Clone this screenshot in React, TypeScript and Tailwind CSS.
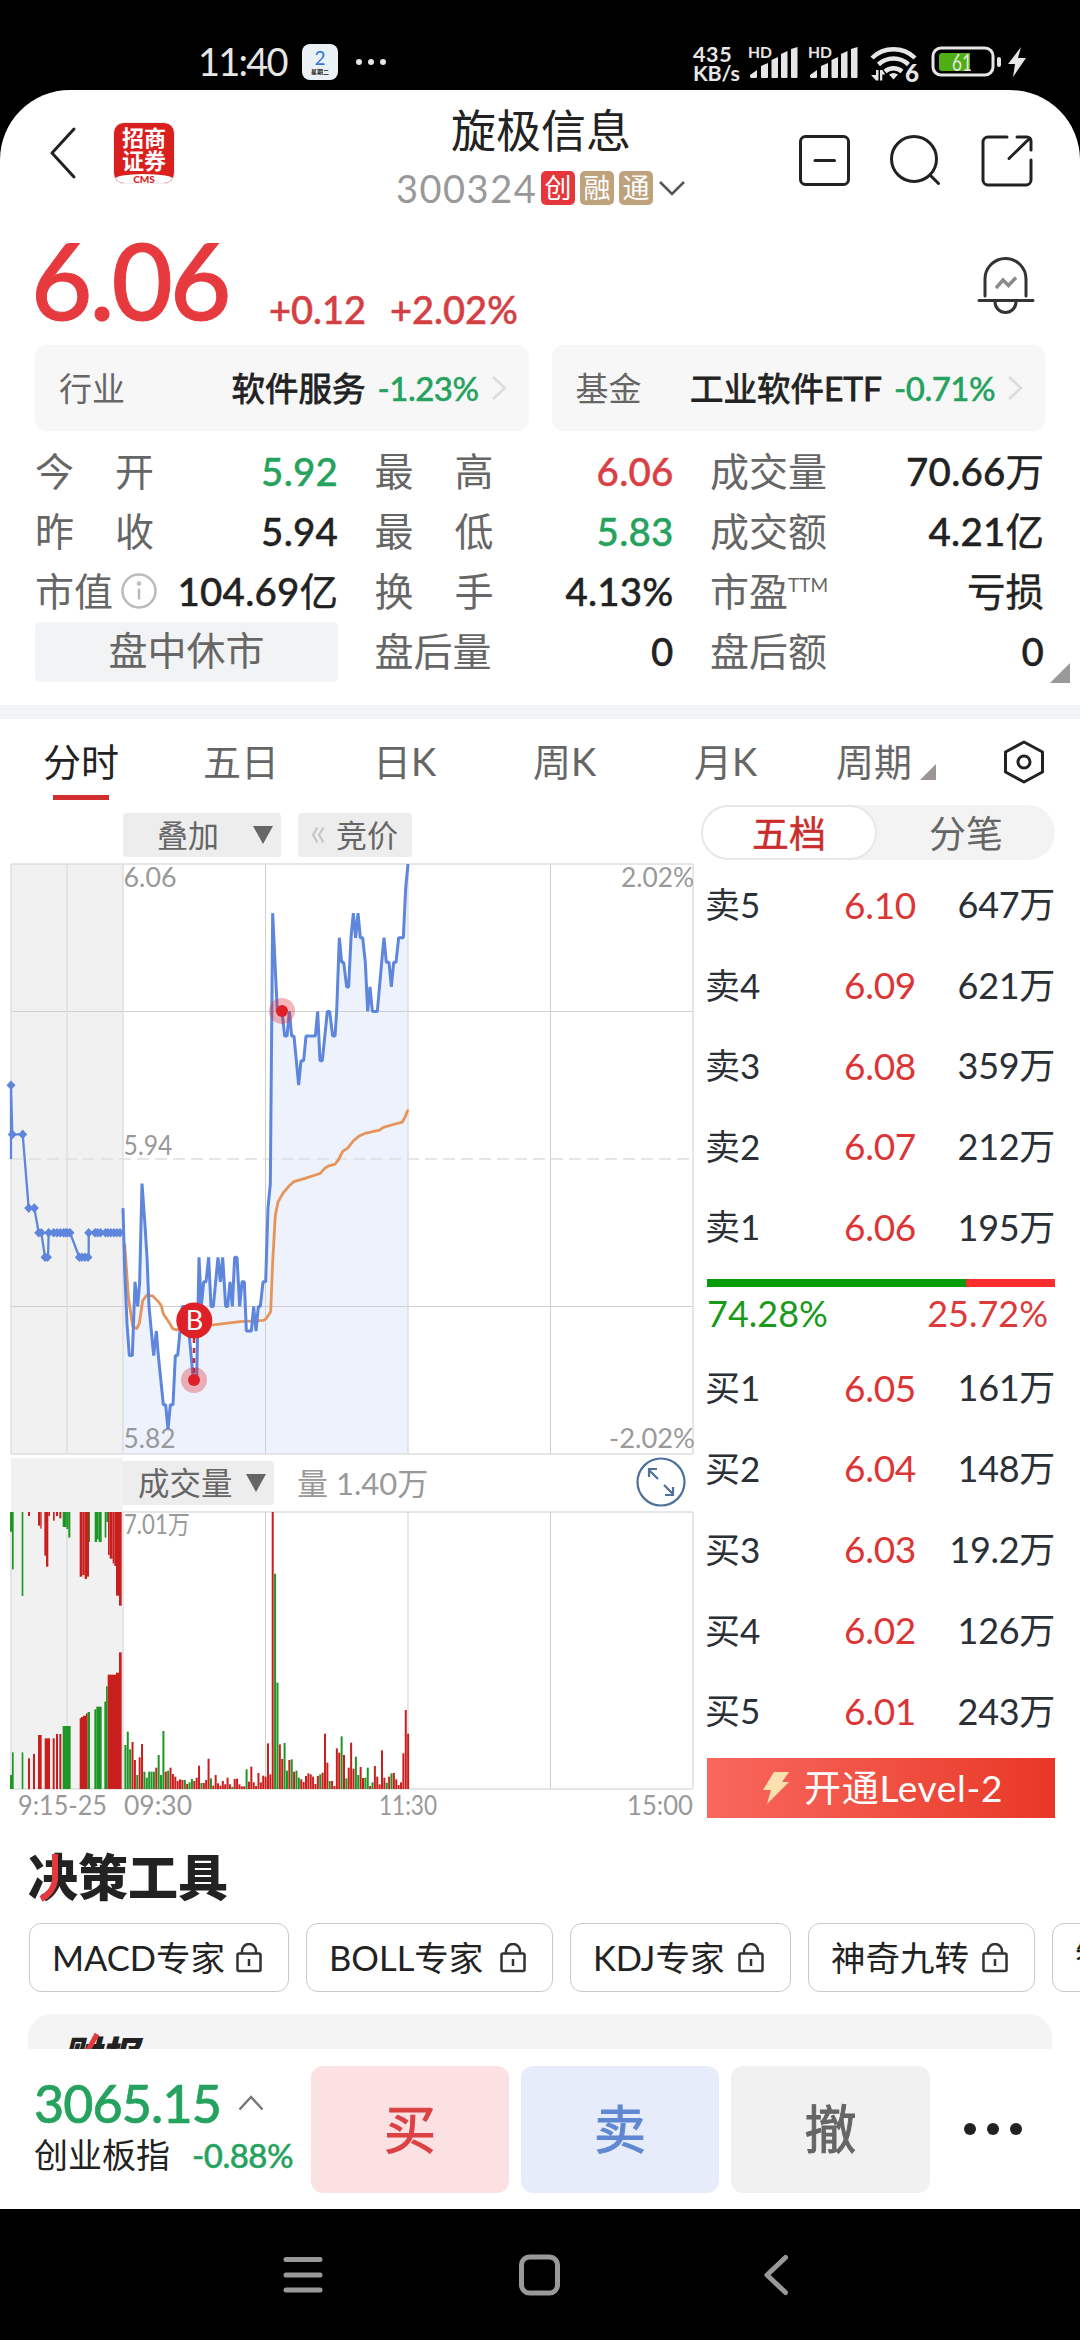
import React from "react";

/* ---------- chart data ---------- */

// Auction phase: [x, price step below the top line]
const auctionLine: [number, number][] = [
  [11, 12], [11, 9], [12.3, 11], [22.7, 11], [28.7, 14], [34.3, 14], [38.7, 15], [41.3, 15], [45, 16], [48, 16],
  [48.7, 15], [70, 15], [79.3, 16], [88.7, 16], [88.7, 15], [123, 15],
];
const auctionDots: [number, number][] = [
  [11, 9], [12.3, 11], [22.7, 11], [28.7, 14], [34.3, 14], [38.7, 15], [41.3, 15], [45, 16], [47.5, 16], [48.7, 15],
  [53.7, 15], [57, 15], [60.3, 15], [63.5, 15], [65.5, 15], [67.5, 15], [70, 15], [79.3, 16], [82, 16], [85, 16],
  [88, 16], [88.7, 15], [95, 15], [97.5, 15], [100.5, 15], [105.5, 15], [108, 15], [111, 15], [114, 15], [117, 15], [120, 15],
];
const priceLine: [number, number][] = [
  [369, 14], [374, 16.5], [381, 18.7], [388, 20], [397, 20], [405, 17], [413, 18], [419, 17], [426, 13], [434, 14.5], [441, 16],
  [447, 18], [454, 19], [461, 20], [469, 19], [475, 20], [490, 22], [497, 22], [504, 23], [511, 22], [519, 22], [526, 20],
  [533, 20], [540, 19], [547, 18], [558, 18], [568, 19.2], [580, 21], [590, 21], [597, 16], [604, 18], [611, 17], [618, 17],
  [626, 16], [633, 18], [640, 18], [654, 16], [661, 17], [668, 16], [677, 18], [683, 18], [690, 17], [697, 18], [704, 16],
  [711, 16], [719, 18], [726, 17], [733, 17], [739, 19], [754, 19], [761, 18], [768, 19], [775, 18], [781, 18], [789, 17],
  [797, 17], [804, 14], [811, 13], [818, 2], [825, 4], [832, 6], [846, 6], [854, 7], [861, 7], [868, 6], [875, 7], [882, 7],
  [896, 9], [903, 8], [911, 8], [918, 7], [946, 7], [953, 6], [960, 8], [967, 8], [982, 6], [989, 6], [998, 7], [1005, 7],
  [1010, 6], [1018, 3], [1025, 4], [1031, 4], [1040, 5], [1046, 5], [1053, 3], [1060, 2], [1067, 3], [1074, 2], [1081, 3],
  [1088, 3], [1096, 4], [1103, 6], [1110, 5], [1117, 6], [1132, 6], [1145, 4], [1152, 3], [1159, 4], [1167, 4], [1174, 5],
  [1181, 4], [1188, 4], [1196, 3], [1210, 3], [1217, 1], [1224, 0],
];
const averageLine: [number, number][] = [
  [374, 940], [378, 985], [385, 1070], [398, 1143], [410, 1148], [418, 1135], [428, 1080], [440, 1066], [458, 1068], [475, 1082], [484, 1092],
  [490, 1112], [505, 1130], [518, 1148], [530, 1151], [560, 1143], [640, 1139], [720, 1131], [790, 1128], [798, 1124],
  [812, 1107], [818, 985], [826, 870], [834, 838], [850, 815], [868, 798], [882, 788], [915, 780], [960, 768], [975, 755],
  [985, 750], [1005, 745], [1015, 735], [1028, 714], [1043, 706], [1060, 688], [1078, 676], [1095, 670], [1138, 662],
  [1150, 655], [1180, 648], [1207, 642], [1215, 630], [1224, 612],
];

// One bar per minute: colour letter, then the top of the bar.
const volumeBars =
  "g885 g845 g898 r876 r930 g975 r922 r882 g965 g983 g965 g965 g965 r953 g915 g975 g843 r965 g962 r953 r972 r980 r993 r988 r990 g990 r1002 g997 g987 r993 r983 r947 g999 r999 r990 r926 g985 r1007 r975 r1000 r1007 r993 r1003 r983 r1003 g1010 r987 r986 r1003 r1009 r1009 g958 r995 r950 r997 r1008 r969 r997 r977 r980 r880 r973 r186 g371 g698 r883 r927 g879 g962 r930 g928 r965 g962 g983 r988 r996 r978 r970 r973 r980 r1002 r978 g973 r968 r851 r938 g993 r993 r1008 r895 r908 g859 r915 g985 r953 r878 r956 g920 g975 r951 r984 g983 g953 r1008 g997 r948 r980 r1003 r901 r983 g998 r980 g970 r969 r988 r1005 r997 r910 r780 r851".split(
    " ",
  );

type Bar = [number, number, string, number];
const auctionTop: Bar[] = [
  [30, 36, "g", 245], [36, 41, "g", 358], [65, 70, "g", 438], [84, 90, "r", 198], [114, 121, "r", 227], [121, 125, "r", 236],
  [133, 138, "r", 317], [138, 145, "r", 350], [145, 150, "r", 198], [159, 164, "r", 212], [168, 174, "r", 198], [178, 184, "r", 205],
  [188, 199, "g", 231], [199, 205, "g", 237], [205, 211, "g", 263], [239, 247, "r", 380], [247, 254, "r", 375], [254, 261, "r", 387],
  [261, 267, "r", 380], [267, 270, "g", 276], [284, 291, "g", 276], [291, 296, "g", 268], [296, 305, "g", 276], [314, 319, "g", 263],
  [319, 324, "g", 216], [324, 329, "r", 315], [329, 338, "r", 326], [338, 343, "r", 340], [343, 348, "r", 348], [348, 357, "r", 437], [357, 365, "r", 467],
];
const auctionBottom: Bar[] = [
  [30, 36, "g", 975], [36, 41, "g", 907], [65, 70, "g", 907], [84, 90, "r", 925], [99, 105, "r", 912], [114, 125, "r", 855],
  [134, 150, "r", 865], [158, 164, "r", 865], [168, 174, "r", 852], [178, 184, "r", 852], [188, 212, "g", 828], [239, 243, "r", 805],
  [243, 249, "r", 801], [249, 258, "r", 797], [258, 263, "r", 790], [263, 270, "g", 786], [283, 289, "g", 778], [289, 305, "g", 770],
  [313, 318, "g", 755], [318, 323, "g", 709], [323, 348, "r", 674], [348, 357, "r", 668], [357, 365, "r", 607],
];

const levelY = (n: number) => 864 + n * 24.58;
const pts = (a: [number, number][]) => a.map(([x, y]) => `${x},${y}`).join(" ");
const pricePts: [number, number][] = priceLine.map(([x, n]) => [x / 3, levelY(n)]);
const tone = (c: string) => (c === "g" ? "#1e9626" : "#c91e1e");

/* ---------- small pieces ---------- */

function StatusBar() {
  return (
    <div className="flex h-[90px] items-start bg-black text-[#e6e6e6]">
      <span className="ml-[198px] mt-[39px] w-[104px] text-[38px] leading-[44px] tracking-[-1.800px]">11:40</span>
      <div className="mt-[44px] flex h-[36px] w-[36px] flex-col items-center rounded-[8px] bg-[#eaf1f6]">
        <span className="mt-[4px] text-[19px] leading-[20px] text-[#2f76d8]">2</span>
        <span className="text-[6px] font-bold leading-[8px] text-[#222]">星期二</span>
      </div>
      <div className="ml-[18px] mt-[59px] flex gap-[6px]">
        {[0, 1, 2].map((i) => (
          <span key={i} className="h-[6px] w-[6px] rounded-full bg-[#e6e6e6]" />
        ))}
      </div>
      <div className="ml-[307px] mt-[45px] w-[54px] text-[21.5px] font-bold leading-[19px]">
        <div className="tracking-[0.6px]">435</div>
        <div className="-tracking-[0.2px]">KB/s</div>
      </div>
      <svg className="mt-[40px]" width="290" height="46" viewBox="746 70 290 46" fill="#e6e6e6">
        {[0, 60].map((d) => (
          <g key={d} transform={`translate(${d} 0)`}>
            <text x="747" y="88" fontSize="16" fontWeight="700" textLength="24" lengthAdjust="spacingAndGlyphs">HD</text>
            <path d="M749 107v-2l7-5v7a1 1 0 0 1-1 1h-5zM760 96l7-3v14a1 1 0 0 1-1 1h-5a1 1 0 0 1-1-1zM770.500 90l6.500-3v20a1 1 0 0 1-1 1h-4.500a1 1 0 0 1-1-1zM780 84l6.500-3v26a1 1 0 0 1-1 1H781a1 1 0 0 1-1-1zM790 79l6.500-2v30a1 1 0 0 1-1 1H791a1 1 0 0 1-1-1z" />
          </g>
        ))}
        <g fill="none" stroke="#e6e6e6" strokeWidth="4.500">
          <path d="M871 88a31 31 0 0 1 43 0" />
          <path d="M877.500 94.500a22 22 0 0 1 30 0" />
          <path d="M884 101.500a13 13 0 0 1 17 0" />
        </g>
        <path d="M888 104.500q4.500-3 9 0l-4.500 5z" />
        <path d="M870 105l5-0v-5h2.500v10.500h-2.500zM879 100h2.300l3 4.500h-3v6H879z" />
        <text x="904" y="112" fontSize="24" fontWeight="900" textLength="14" lengthAdjust="spacingAndGlyphs" stroke="#000" strokeWidth="4" paintOrder="stroke">6</text>
        <rect x="932" y="78" width="60" height="27" rx="8" fill="none" stroke="#e6e6e6" strokeWidth="3" />
        <path d="M941 83h28v18h-28a3 3 0 0 1-3-3V86a3 3 0 0 1 3-3z" fill="#4fae13" />
        <text x="951" y="101" fontSize="23" textLength="20" lengthAdjust="spacingAndGlyphs">61</text>
        <rect x="996" y="87" width="4" height="10" rx="2" />
        <path d="M1020 77l-13 17h7l-2 13 13-19h-8z" />
      </svg>
    </div>
  );
}

function Header() {
  return (
    <div className="flex h-[140px] items-start text-[#222]">
      <svg className="ml-[48px] mt-[35px]" width="32" height="56" viewBox="0 0 32 56" fill="none" stroke="#222" strokeWidth="3" strokeLinecap="round" strokeLinejoin="round">
        <path d="M26 4L4 28l22 24" />
      </svg>
      <div className="ml-[33px] mt-[32px] flex h-[62px] w-[62px] flex-col items-center overflow-hidden rounded-[11px] border border-[#ececec] bg-[#d9201f] text-white">
        <div className="mt-[3px] text-[22px] font-bold leading-[23px]">招商</div>
        <div className="text-[22px] font-bold leading-[23px]">证券</div>
        <div className="mt-[2px] w-full rounded-t-[50%] bg-white text-center text-[10px] font-black leading-[11px] text-[#d9201f]">CMS</div>
      </div>
      <div className="ml-[218px] mt-[13px] flex w-[296px] flex-col items-center">
        <div className="text-[45px] leading-[56px]">旋极信息</div>
        <div className="mt-[7px] flex h-[44px] items-center">
          <span className="w-[145px] text-[38px] leading-[44px] tracking-[1.500px] text-[#999]">300324</span>
          <span className="h-[34px] w-[34px] rounded-[5px] bg-[#e4363b] text-center text-[27px] leading-[33px] text-white">创</span>
          <span className="ml-[5px] h-[34px] w-[34px] rounded-[5px] bg-[#bda27c] text-center text-[27px] leading-[33px] text-white">融</span>
          <span className="ml-[5px] h-[34px] w-[34px] rounded-[5px] bg-[#bda27c] text-center text-[27px] leading-[33px] text-white">通</span>
          <svg className="ml-[5px]" width="28" height="18" viewBox="0 0 28 18" fill="none" stroke="#555" strokeWidth="2.500">
            <path d="M2 3l12 12L26 3" />
          </svg>
        </div>
      </div>
      <svg className="ml-[105px] mt-[41px]" width="240" height="60" viewBox="793 131 240 60" fill="none" stroke="#222" strokeWidth="3" strokeLinecap="round">
        <rect x="799.500" y="136.500" width="48" height="48" rx="5" />
        <path d="M814 160.500h19.500" />
        <circle cx="913" cy="159" r="22.500" />
        <path d="M929 175l8.500 8.500" />
        <path d="M1006 137h-19a5 5 0 0 0-5 5v38a5 5 0 0 0 5 5h38a5 5 0 0 0 5-5v-20M1016 137h10a4 4 0 0 1 4 4v9M1027 140l-19 18.500" />
      </svg>
    </div>
  );
}

function PriceRow() {
  return (
    <div className="flex h-[115px] items-end text-[#e63a3f]">
      <span className="mb-[21px] ml-[31px] w-[238px] text-[106px] font-medium leading-[90px] tracking-[-3px] [-webkit-text-stroke:1px_#e63a3f]">6.06</span>
      <span className="mb-[11px] w-[121px] text-[38px] font-medium leading-[50px] text-[#d43f43] [-webkit-text-stroke:0.5px_#d43f43]">+0.12</span>
      <span className="mb-[11px] text-[38px] font-medium leading-[50px] text-[#d43f43] [-webkit-text-stroke:0.5px_#d43f43]">+2.02%</span>
      <svg className="mb-[27px] ml-auto mr-[44px]" width="62" height="66" viewBox="974 252 62 66" fill="none" stroke="#333" strokeWidth="3" strokeLinecap="round">
        <path d="M985 296v-17a20.500 20.500 0 0 1 41 0v17M979 300.500h54M995 302a10.500 10.500 0 0 0 21 0" />
        <path d="M996 288l7-8 5.500 5.500 7.500-8" stroke="#8a8a8a" strokeLinecap="butt" strokeWidth="3.500" />
      </svg>
    </div>
  );
}

function IndexCard({ label, name, pct }: { label: string; name: string; pct: string }) {
  return (
    <div className="flex h-[86px] flex-1 items-center rounded-[12px] bg-[#f7f7f7] pl-[24px] pr-[21px] text-[33px] leading-[42px]">
      <span className="text-[#666]">{label}</span>
      <span className="ml-auto text-[33.500px] text-[#222] [-webkit-text-stroke:0.8px_#222]">{name}</span>
      <span className="ml-[12px] w-[103px] text-[33px] font-medium tracking-[-0.500px] text-[#25a25e] [-webkit-text-stroke:0.4px_#25a25e]">{pct}</span>
      <svg className="ml-[10px]" width="17" height="26" viewBox="0 0 17 26" fill="none" stroke="#dcdcdc" strokeWidth="2.500">
        <path d="M2 2l12 11L2 24" />
      </svg>
    </div>
  );
}

function Stat({ label, value, unit, cls = "text-[#222]" }: { label: React.ReactNode; value?: string; unit?: string; cls?: string }) {
  return (
    <div className="flex h-[60px] items-center justify-between">
      <span className="flex items-center whitespace-pre text-[39px] leading-[50px] text-[#666]">{label}</span>
      <span className={`flex whitespace-nowrap text-[38.500px] leading-[50px] [-webkit-text-stroke:0.4px_currentColor] ${cls}`}>
        {value && <span className="font-medium tracking-[0.200px]">{value}</span>}
        {unit && <span>{unit}</span>}
      </span>
    </div>
  );
}

function Spread({ a, b }: { a: string; b: string }) {
  return (
    <span className="flex w-[119px] justify-between">
      <span>{a}</span>
      <span>{b}</span>
    </span>
  );
}

function Stats() {
  return (
    <div className="mt-[10px] grid h-[264px] grid-cols-[303px_299px_334px] content-start gap-x-[36.500px] pl-[35px]">
      <Stat label={<Spread a="今" b="开" />} value="5.92" cls="text-[#25a25e]" />
      <Stat label={<Spread a="最" b="高" />} value="6.06" cls="text-[#d93f44]" />
      <Stat label="成交量" value="70.66" unit="万" />
      <Stat label={<Spread a="昨" b="收" />} value="5.94" />
      <Stat label={<Spread a="最" b="低" />} value="5.83" cls="text-[#25a25e]" />
      <Stat label="成交额" value="4.21" unit="亿" />
      <Stat
        label={
          <>
            市值
            <svg className="ml-[8px]" width="36" height="36" viewBox="0 0 36 36" fill="none" stroke="#bbb" strokeWidth="2.500">
              <circle cx="18" cy="18" r="16.500" />
              <path d="M18 15.500v11" />
              <circle cx="18" cy="10.500" r="1" />
            </svg>
          </>
        }
        value="104.69"
        unit="亿"
      />
      <Stat label={<Spread a="换" b="手" />} value="4.13%" />
      <Stat label={<>市盈<span className="-mt-[12px] text-[19px] leading-[20px]">TTM</span></>} unit="亏损" />
      <div className="mt-px h-[60px] rounded-[5px] bg-[#f2f3f5] text-center text-[39px] leading-[57px] text-[#666]">盘中休市</div>
      <Stat label="盘后量" value="0" />
      <div className="relative">
        <Stat label="盘后额" value="0" />
        <svg className="absolute -right-[26px] top-[42px]" width="20" height="20" viewBox="0 0 20 20" fill="#999">
          <path d="M20 0v20H0z" />
        </svg>
      </div>
    </div>
  );
}

function Tabs() {
  return (
    <div className="flex h-[86px] items-start pt-[17px] text-[38px] leading-[50px] text-[#666]">
      <div className="ml-[43px] flex w-[76px] flex-col items-center text-[#222]">
        <span>分时</span>
        <span className="mt-[9px] h-[5px] w-[56px] bg-[#d23030]" />
      </div>
      <span className="ml-[84px] w-[170px]">五日</span>
      <span className="w-[160px]">日K</span>
      <span className="w-[161px]">周K</span>
      <span className="w-[142px]">月K</span>
      <span>周期</span>
      <svg className="ml-[8px] mt-[28px]" width="16" height="16" viewBox="0 0 16 16" fill="#9d9494">
        <path d="M16 0v16H0z" />
      </svg>
      <svg className="ml-[66px] mt-[3px]" width="44" height="46" viewBox="0 0 44 46" fill="none" stroke="#222" strokeWidth="3" strokeLinejoin="round">
        <path d="M22 3l18.500 10v20L22 43 3.500 33V13z" />
        <circle cx="22" cy="23" r="6" />
      </svg>
    </div>
  );
}

const gray = "#999";

function Label({ x, y, w, children }: { x: number; y: number; w: number; children: string }) {
  return (
    <text x={x} y={y} textLength={w} lengthAdjust="spacingAndGlyphs" fill={gray} fontSize="26">
      {children}
    </text>
  );
}

function PriceChart() {
  const line = pts(pricePts);
  return (
    <svg className="block" width="701" height="598" viewBox="0 860 701 598">
      <rect x="11" y="864" width="112" height="590" fill="#f1f1f1" />
      <polygon points={`123,1454 ${line} 408,1454`} fill="#edf2fd" />
      <g stroke="#cfcfd3" strokeWidth="1">
        <path d="M11 1011.500H693M11 1306.500H693M265.500 864V1454M550.500 864V1454" />
      </g>
      <g stroke="#dedee0" strokeWidth="1.500">
        <path d="M11 864V1454M67 864V1454M123 864V1454M408 864V1454M693 864V1454M11 864H693M11 1454H693" />
        <path d="M11 1159H693" strokeDasharray="12 6" />
      </g>
      <Label x={123.5} y={887} w={53}>6.06</Label>
      <Label x={123.5} y={1155} w={49}>5.94</Label>
      <Label x={123.5} y={1448} w={52}>5.82</Label>
      <Label x={621} y={887} w={73}>2.02%</Label>
      <Label x={609} y={1448} w={86}>-2.02%</Label>
      <polyline points={pts(averageLine.map(([x, y]) => [x / 3, 860 + y / 2.45]))} fill="none" stroke="#e5955a" strokeWidth="2.800" strokeLinejoin="round" />
      <g fill="none" stroke="#5e86dc" strokeWidth="3">
        <polyline points={pts(auctionLine.map(([x, n]) => [x, levelY(n)]))} strokeWidth="2.300" />
        <polyline points={line} strokeLinejoin="bevel" />
      </g>
      <g fill="#5e86dc">
        {auctionDots.map(([x, n], i) => (
          <path key={i} d={`M${x - 4.5} ${levelY(n)}l4.500-4.800 4.500 4.800-4.500 4.800z`} />
        ))}
      </g>
      <g fill="#dd2127">
        <circle cx="282" cy="1011" r="13" opacity="0.330" />
        <circle cx="282" cy="1011" r="6" />
        <circle cx="194" cy="1380" r="13" opacity="0.330" />
        <circle cx="194" cy="1380" r="6" />
        <path d="M194 1338V1376" stroke="#c62a3a" strokeWidth="2.500" strokeDasharray="5 5" />
        <circle cx="194.300" cy="1320.500" r="18" />
      </g>
      <text x="194.500" y="1330" fontSize="27" fill="#fff" textAnchor="middle">B</text>
    </svg>
  );
}

function VolumeChart() {
  return (
    <svg className="block" width="701" height="308" viewBox="0 1511 701 308">
      <rect x="11" y="1511" width="112" height="278" fill="#f1f1f1" />
      <g stroke="#dedee0" strokeWidth="1.500">
        <path d="M11 1512V1789M67 1512V1789M123 1512V1789M408 1512V1789M693 1512V1789M123 1512H693M11 1789H693" />
      </g>
      <path d="M265.500 1512V1789M550.500 1512V1789" stroke="#cfcfd3" />
      <g>
        {auctionTop.map(([a, b, c, y], i) => (
          <rect key={i} x={a / 3} y="1512" width={(b - a) / 3} height={(y - 186) / 3} fill={tone(c)} />
        ))}
        {auctionBottom.map(([a, b, c, y], i) => (
          <rect key={i} x={a / 3} y={1450 + y / 3} width={(b - a) / 3} height={(1017 - y) / 3} fill={tone(c)} />
        ))}
        {volumeBars.map((v, i) => {
          const y = Number(v.slice(1));
          return <rect key={i} x={124.4 + i * 2.376} y={1450 + y / 3} width="2" height={(1017 - y) / 3} fill={tone(v[0])} />;
        })}
      </g>
      <Label x={124} y={1534} w={66}>7.01万</Label>
      <Label x={18} y={1815} w={89}>9:15-25</Label>
      <Label x={124} y={1815} w={68}>09:30</Label>
      <Label x={379} y={1815} w={58}>11:30</Label>
      <Label x={627} y={1815} w={66}>15:00</Label>
    </svg>
  );
}

function ChartColumn() {
  return (
    <div className="w-[701px]">
      <div className="flex h-[55px] items-start pl-[123px] pt-[8px] text-[#666]">
        <div className="flex h-[44px] w-[158px] items-center rounded-[4px] bg-[#ededed] pl-[34px] text-[31px] leading-[44px]">
          叠加
          <svg className="ml-[34px]" width="20" height="20" viewBox="0 0 20 20" fill="#666"><path d="M0 1h20L10 19z" /></svg>
        </div>
        <div className="ml-[17px] flex h-[44px] w-[114px] items-center rounded-[4px] bg-[#ededed] pl-[13px] text-[31px] leading-[44px]">
          <svg width="14" height="18" viewBox="0 0 14 18" fill="none" stroke="#c4c4c4" strokeWidth="2"><path d="M6.500 1.500L2 9l4.500 7.500M12.500 1.500L8 9l4.500 7.500" /></svg>
          <span className="ml-[11px]">竞价</span>
        </div>
      </div>
      <PriceChart />
      <div className="flex h-[53px] items-center">
        <div className="ml-[11px] h-[53px] w-[112px] bg-[#f1f1f1]" />
        <div className="-mt-[4px] flex h-[44px] w-[151px] items-center rounded-r-[4px] bg-[#ededed] pl-[15px] text-[31.500px] leading-[44px] text-[#666]">
          成交量
          <svg className="ml-[13px]" width="20" height="20" viewBox="0 0 20 20" fill="#666"><path d="M0 1h20L10 19z" /></svg>
        </div>
        <span className="-mt-[4px] ml-[23px] whitespace-nowrap text-[31px] leading-[44px] text-[#999]">量 1.40万</span>
        <svg className="-mt-[5px] ml-auto mr-[14px]" width="52" height="52" viewBox="0 0 52 52" fill="none" stroke="#4d7199" strokeWidth="2.200">
          <circle cx="26" cy="26" r="23.500" />
          <path d="M23 23l-9-9M14 21v-8h8M29 29l9 9M38 31v8h-8" />
        </svg>
      </div>
      <VolumeChart />
    </div>
  );
}

function Quote({ side, price, vol, h }: { side: string; price: string; vol: string; h: string }) {
  return (
    <div className={`flex items-center text-[37px] ${h}`}>
      <span className="w-[90px] text-[35px] text-[#2b2f36]">{side}</span>
      <span className="w-[121px] text-right text-[#dc3535] tracking-[-0.300px]">{price}</span>
      <span className="ml-auto whitespace-nowrap text-[36px] tracking-[-0.300px] text-[#2b2f36]">{vol}</span>
    </div>
  );
}

const sells = [["卖5", "6.10", "647万"], ["卖4", "6.09", "621万"], ["卖3", "6.08", "359万"], ["卖2", "6.07", "212万"], ["卖1", "6.06", "195万"]];
const buys = [["买1", "6.05", "161万"], ["买2", "6.04", "148万"], ["买3", "6.03", "19.2万"], ["买4", "6.02", "126万"], ["买5", "6.01", "243万"]];

function OrderBook() {
  return (
    <div className="w-[354px]">
      <div className="flex h-[55px] rounded-full bg-[#f3f3f3] text-center text-[37px] leading-[54px]">
        <div className="w-[176px] rounded-full border-2 border-[#e8e8e8] bg-white text-[#cb2c2c] [-webkit-text-stroke:0.5px_#cb2c2c]">五档</div>
        <div className="flex-1 leading-[57px] text-[#666]">分笔</div>
      </div>
      <div className="pl-[4px]">
        <div className="mt-[4px]">
          {sells.map(([s, p, v]) => <Quote key={s} side={s} price={p} vol={v} h="h-[80.600px]" />)}
        </div>
        <div className="ml-[2px] mt-[12px] flex h-[8px]">
          <div className="w-[259px] bg-[#059c05]" />
          <div className="flex-1 bg-[#fb2c2c]" />
        </div>
        <div className="mt-px flex h-[50px] items-center justify-between pl-[2px] pr-[7px] text-[36px]">
          <span className="text-[#1a9a1a]">74.28%</span>
          <span className="text-[#dc3b3b]">25.72%</span>
        </div>
        <div className="mt-[9px]">
          {buys.map(([s, p, v]) => <Quote key={s} side={s} price={p} vol={v} h="h-[80.800px]" />)}
        </div>
      </div>
      <div className="ml-[6px] mt-[7px] flex h-[60px] items-center bg-linear-to-r from-[#f9675d] to-[#e83625] pl-[55px] text-[37px] text-white">
        <svg width="28" height="34" viewBox="0 0 28 34" fill="#fde0b0"><path d="M12 1h15l-7 10h7L5 33l4-14H1z" /></svg>
        <span className="ml-[14px] tracking-[0.700px]">开通Level-2</span>
      </div>
    </div>
  );
}

function Chip({ label, w }: { label: string; w: string }) {
  return (
    <div className={`flex h-[69px] shrink-0 items-center justify-between whitespace-nowrap rounded-[12px] border border-[#c8c8c8] pl-[22px] pr-[26px] text-[34.500px] text-[#222] ${w}`}>
      {label}
      <svg width="26" height="30" viewBox="0 0 26 30" fill="none" stroke="#333" strokeWidth="2.500">
        <rect x="1.500" y="10.500" width="23" height="17.500" rx="1.500" />
        <path d="M6 10V8a7 7 0 0 1 14 0v2M13 16v7" />
      </svg>
    </div>
  );
}

function Tools() {
  return (
    <div className="h-[229px] overflow-hidden">
      <div className="relative ml-[28px] mt-[25px] h-[64px] w-[220px] text-[50px] font-black leading-[64px] text-[#222]">
        决策工具
        <svg className="absolute left-0 top-0" width="50" height="64" viewBox="28 1845 50 64" fill="none" stroke="#e5393f" strokeWidth="6">
          <path d="M55 1854v26q-2 13-14 19" />
        </svg>
      </div>
      <div className="ml-[29px] mt-[14px] flex gap-[17px]">
        <Chip label="MACD专家" w="w-[260px]" />
        <Chip label="BOLL专家" w="w-[247px]" />
        <Chip label="KDJ专家" w="w-[221px]" />
        <Chip label="神奇九转" w="w-[227px]" />
        <Chip label="智能盯盘" w="w-[227px]" />
      </div>
      <div className="relative ml-[28px] mt-[22px] h-[90px] w-[1024px] rounded-t-[24px] bg-[#f4f4f4] pl-[34px] pt-[15px] text-[38px] font-black italic leading-[50px] text-[#222]">
        财报
        <svg className="absolute left-[56px] top-[18px]" width="20" height="40" viewBox="0 0 20 40" fill="none" stroke="#e5393f" strokeWidth="5">
          <path d="M13 2L3 20" />
        </svg>
      </div>
    </div>
  );
}

function BottomBar() {
  return (
    <div className="flex h-[160px] bg-white">
      <div className="ml-[34px] w-[277px] pt-[24px]">
        <div className="flex h-[60px] items-center text-[52px] font-medium leading-[60px] text-[#25a25e]">
          <span className="w-[204px] tracking-[-0.900px] [-webkit-text-stroke:0.6px_#25a25e]">3065.15</span>
          <svg width="26" height="18" viewBox="0 0 26 18" fill="none" stroke="#777" strokeWidth="2.500"><path d="M1.500 15.500L13 3l11.500 12.500" /></svg>
        </div>
        <div className="flex h-[44px] items-center text-[34px] leading-[42px] text-[#222]">
          <span>创业板指</span>
          <span className="ml-[22px] text-[33px] font-medium tracking-[-0.500px] text-[#25a25e] [-webkit-text-stroke:0.4px_#25a25e]">-0.88%</span>
        </div>
      </div>
      <div className="mt-[17px] flex gap-[12px] text-center text-[52px] leading-[126px]">
        <div className="h-[127px] w-[198px] rounded-[12px] bg-[#fbe1e2] text-[#dc4144] [-webkit-text-stroke:1px_#dc4144]">买</div>
        <div className="h-[127px] w-[198px] rounded-[12px] bg-[#e6ecf9] text-[#6088d2] [-webkit-text-stroke:1px_#6088d2]">卖</div>
        <div className="h-[127px] w-[199px] rounded-[12px] bg-[#f1f1f1] text-[#666] [-webkit-text-stroke:1px_#666]">撤</div>
      </div>
      <div className="ml-[34px] mt-[74px] flex gap-[11px]">
        {[0, 1, 2].map((i) => <span key={i} className="h-[12px] w-[12px] rounded-full bg-[#222]" />)}
      </div>
    </div>
  );
}

function NavBar() {
  return (
    <div className="flex h-[131px] items-start bg-black pt-[42px]">
      <svg className="ml-[280px]" width="46" height="48" viewBox="0 0 46 48" stroke="#999" strokeWidth="5" strokeLinecap="round"><path d="M6 8.500h34M6 24h34M6 39h34" /></svg>
      <svg className="ml-[190px]" width="46" height="48" viewBox="0 0 46 48" fill="none" stroke="#999" strokeWidth="5"><rect x="5.500" y="6" width="36" height="36" rx="8" /></svg>
      <svg className="ml-[198px]" width="34" height="48" viewBox="0 0 34 48" fill="none" stroke="#999" strokeWidth="5" strokeLinecap="round" strokeLinejoin="round"><path d="M25.500 6.500L7 24l18.500 17.500" /></svg>
    </div>
  );
}

export default function App() {
  return (
    <div className="h-[2340px] w-[1080px] overflow-hidden bg-black font-['Lato','Noto_Sans_CJK_SC',sans-serif]">
      <StatusBar />
      <div className="h-[2119px] overflow-hidden rounded-t-[70px] bg-white">
        <Header />
        <PriceRow />
        <div className="flex gap-[23px] pl-[35px] pr-[35px]">
          <IndexCard label="行业" name="软件服务" pct="-1.23%" />
          <IndexCard label="基金" name="工业软件ETF" pct="-0.71%" />
        </div>
        <Stats />
        <div className="h-[14px] bg-[#f1f3f5]" />
        <Tabs />
        <div className="flex h-[1015px]">
          <ChartColumn />
          <OrderBook />
        </div>
        <Tools />
        <BottomBar />
      </div>
      <NavBar />
    </div>
  );
}
